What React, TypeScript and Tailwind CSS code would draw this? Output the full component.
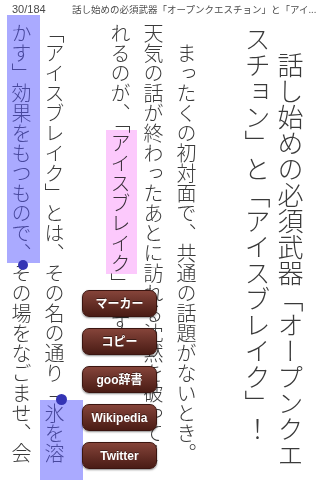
import type { ReactNode } from "react";

const VERT = "[writing-mode:vertical-rl] whitespace-nowrap";

const MENU = ["マーカー", "コピー", "goo辞書", "Wikipedia", "Twitter"];

function HeadingLine({ children, indent = false }: { children: ReactNode; indent?: boolean }) {
  return (
    <div className={`${VERT} h-[448px] w-[33px] text-[26px] leading-[33px] ${indent ? "indent-[1em]" : ""}`}>
      {children}
    </div>
  );
}

function BodyLine({ children, indent = false }: { children: ReactNode; indent?: boolean }) {
  return (
    <div className={`${VERT} h-[445px] w-[33px] text-[20px] leading-[33px] ${indent ? "indent-[1em]" : ""}`}>
      {children}
    </div>
  );
}

export default function App() {
  return (
    <div className="relative h-[480px] w-[320px] overflow-hidden bg-white font-['Noto_Sans_CJK_JP',sans-serif] font-light text-[#3a3a3a]">
      <header className="flex h-[23px] items-start pt-[2px] text-[#4a4a4a]">
        <span className="ml-[12px] w-[60px] font-['Liberation_Sans','Noto_Sans_CJK_JP',sans-serif] text-[11px] font-normal leading-[14px]">
          30/184
        </span>
        <span className="whitespace-nowrap text-[9.5px] font-normal leading-[14px]">
          話し始めの必須武器「オープンクエスチョン」と「アイ...
        </span>
      </header>

      <main className="flex flex-row-reverse items-start gap-[38px] pr-[13px]">
        <section className="mt-[3px] flex flex-row-reverse">
          <HeadingLine indent>話し始めの必須武器「オープンクエ</HeadingLine>
          <HeadingLine>スチョン」と「アイスブレイク」！</HeadingLine>
        </section>

        <div className="flex flex-row-reverse gap-[33px]">
          <section className="flex flex-row-reverse">
            <BodyLine indent>まったくの初対面で、共通の話題がないとき。</BodyLine>
            <BodyLine>天気の話が終わったあとに訪れる沈黙を破ってく</BodyLine>
            <BodyLine>れるのが、「アイスブレイク」です。</BodyLine>
          </section>
          <section className="flex flex-row-reverse">
            <BodyLine>「アイスブレイク」とは、その名の通り「氷を溶</BodyLine>
            <BodyLine>かす」効果をもつもので、その場をなごませ、会</BodyLine>
          </section>
        </div>
      </main>

      {/* marker */}
      <div className="absolute left-[106px] top-[130px] h-[144px] w-[31px] bg-[#fcc9fc] mix-blend-multiply" />

      {/* selection */}
      <div className="absolute left-[7px] top-[15px] h-[248px] w-[33px] bg-[#5555ff]/50" />
      <div className="absolute left-[40px] top-[400px] h-[80px] w-[43px] bg-[#5555ff]/50" />
      <div className="absolute left-[56px] top-[394px] h-[11px] w-[11px] rounded-full bg-[#3434b4]" />
      <div className="absolute left-[18px] top-[260px] h-[10px] w-[10px] rounded-full bg-[#3434b4]" />

      <nav className="absolute left-[82px] top-[290px] flex w-[75px] flex-col gap-[11px]">
        {MENU.map((label) => (
          <button
            key={label}
            type="button"
            className="flex h-[27px] items-center justify-center rounded-[7px] border border-[#3b1510] bg-linear-to-b from-[#85443a] to-[#4a1c15] font-['Liberation_Sans','Noto_Sans_CJK_JP',sans-serif] text-[12px] font-bold text-white shadow-[0_1px_2px_rgba(0,0,0,0.45)] [text-shadow:0_-1px_0_rgba(0,0,0,0.45)]"
          >
            {label}
          </button>
        ))}
      </nav>
    </div>
  );
}
